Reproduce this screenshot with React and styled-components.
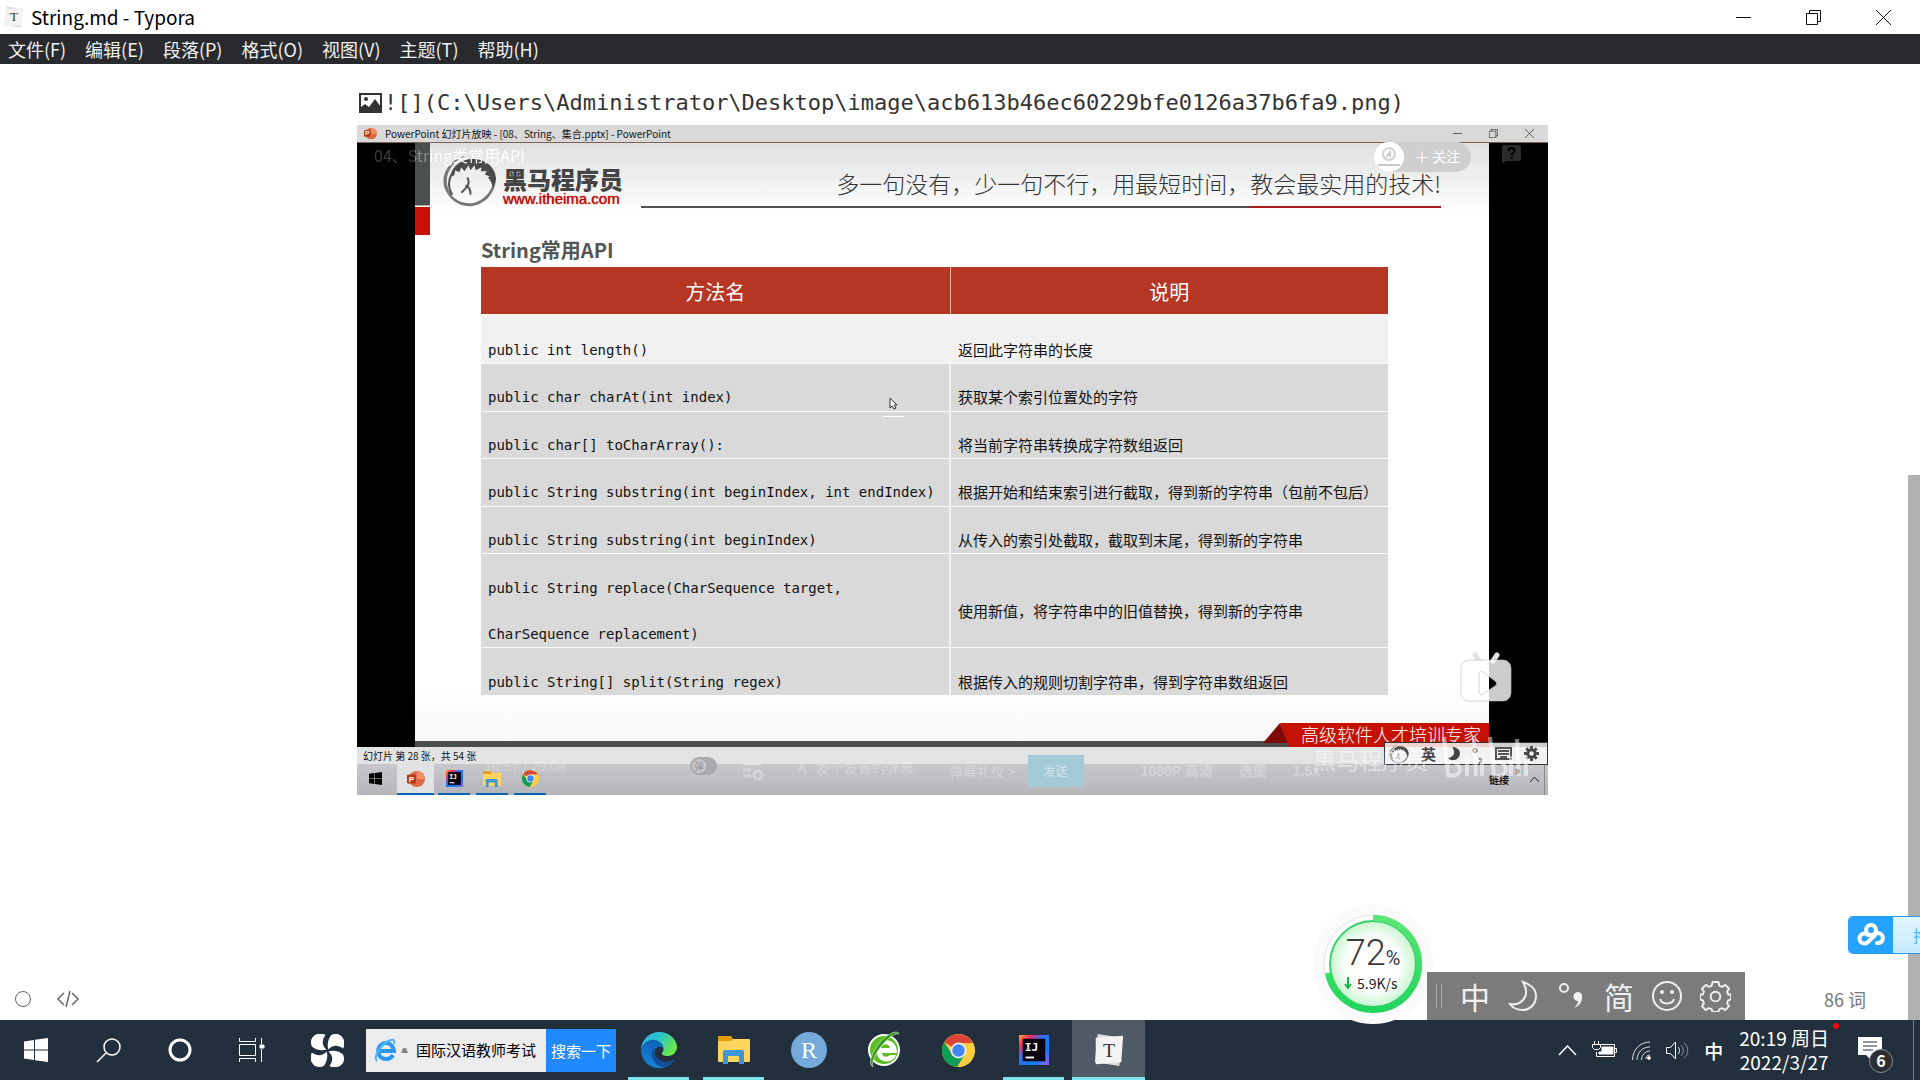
import React from "react";
import styled, { createGlobalStyle } from "styled-components";

const GlobalStyle = createGlobalStyle`
  * { box-sizing: border-box; }
  body {
    margin: 0;
    background: #fff;
    font-family: "Noto Sans CJK SC", sans-serif;
  }
  button {
    border: 0;
    padding: 0;
    background: none;
    color: inherit;
    font: inherit;
  }
  svg { display: block; flex: none; }
`;

const Page = styled.div`
  display: flex;
  flex-direction: column;
  height: 100vh;
  min-height: 900px;
  overflow: hidden;
`;

/* ---------- window chrome ---------- */

const TitleBar = styled.header`
  display: flex;
  align-items: center;
  height: 34px;
  padding: 0 2px 0 3px;
  background: #fff;
`;

const WindowTitle = styled.h1`
  margin: 0 auto 0 6px;
  font-size: 19px;
  line-height: 34px;
  font-weight: 400;
  color: #000;
`;

const WindowButton = styled.button`
  display: flex;
  align-items: center;
  justify-content: center;
  width: 70px;
  height: 34px;
`;

const MenuBar = styled.nav`
  display: flex;
  gap: 19px;
  height: 30px;
  padding-left: 8px;
  background: #292a2e;
  color: #f0f0f0;
`;

const MenuItem = styled.button`
  font-size: 18px;
  line-height: 30px;
`;

/* ---------- editor ---------- */

const Editor = styled.main`
  position: relative;
  flex: 1;
  display: flex;
  min-height: 0;
`;

const Writing = styled.article`
  flex: 1;
  padding: 22px 35px 0 32px;
`;

const Content = styled.div`
  max-width: 1191px;
  margin: 0 auto;
`;

const ImageSource = styled.div`
  display: flex;
  align-items: center;
  gap: 2px;
  height: 33px;
  padding-left: 2px;
  margin-bottom: 6px;
  font-family: "DejaVu Sans Mono", monospace;
  font-size: 22px;
  line-height: 33px;
  color: #333;
  white-space: nowrap;
`;

const ScrollTrack = styled.div`
  display: flex;
  align-items: flex-end;
  width: 12px;
`;

const ScrollThumb = styled.div`
  width: 100%;
  height: 57%;
  background: #b1b1b1;
`;

const EditorFooter = styled.footer`
  position: absolute;
  left: 14px;
  right: 54px;
  bottom: 7px;
  display: flex;
  align-items: center;
  gap: 24px;
  color: #777;
  font-size: 18px;
  line-height: 28px;
`;

const WordCount = styled.button`
  margin-left: auto;
`;

/* ---------- the slide show recording ---------- */

const Shot = styled.section`
  position: relative;
  height: 670px;
  overflow: hidden;
  display: flex;
  flex-direction: column;
  background: #000;
  color: #111;
`;

const PptBar = styled.div`
  display: flex;
  align-items: center;
  height: 18px;
  padding: 0 14px 0 7px;
  background: #d9d9d9;
  border-bottom: 1px solid #7c6250;
  font-size: 10px;
  line-height: 17px;
`;

const PptTitle = styled.span`
  margin: 0 auto 0 8px;
`;

const PptControls = styled.div`
  display: flex;
  gap: 27px;
`;

const Slide = styled.div`
  flex: 1;
  display: flex;
  flex-direction: column;
  margin: 0 59px 0 58px;
  background: linear-gradient(#dfe0e1, #fff 70px, #fff 540px, #f6f6f6);
`;

const SlideBody = styled.div`
  flex: 1;
  display: flex;
`;

const Strip = styled.div`
  width: 15px;
  &::before {
    content: "";
    display: block;
    height: 62px;
    background: #4b4f4f;
    border-bottom: 1px solid #aaa;
  }
  &::after {
    content: "";
    display: block;
    height: 28px;
    margin-top: 1px;
    background: #c81104;
  }
`;

const SlideMain = styled.div`
  flex: 1;
`;

const SlideHead = styled.div`
  display: flex;
  height: 65px;
  padding: 0 48px 0 12px;
`;

const Brand = styled.div`
  display: flex;
  align-items: flex-end;
  gap: 6px;
  width: 199px;
`;

const BrandText = styled.div`
  display: flex;
  flex-direction: column;
  padding-bottom: 1px;
`;

const BrandName = styled.span`
  font-size: 24px;
  line-height: 24px;
  font-weight: 900;
  color: #444;
`;

const BrandLink = styled.a`
  font-family: "Liberation Sans", sans-serif;
  font-size: 15px;
  line-height: 16px;
  font-weight: 400;
  color: #b90d0a;
  text-decoration: none;
  text-shadow: 0 0 1px #b90d0a;
`;

const Slogan = styled.p`
  flex: 1;
  margin: 0;
  padding-top: 24px;
  border-bottom: 2px solid;
  border-image: linear-gradient(90deg, #55504f 76%, #a81c1c 76%) 1;
  font-family: KaiTi, "Noto Sans CJK SC", serif;
  font-size: 23px;
  line-height: 32px;
  font-weight: 300;
  color: #333;
  text-align: right;
  white-space: nowrap;
`;

const SlideHeading = styled.h2`
  margin: 29px 0 4px 51px;
  font-size: 20px;
  line-height: 26px;
  font-weight: 700;
  color: #555;
`;

const ApiTable = styled.table`
  width: calc(100% - 152px);
  height: 428px;
  margin-left: 51px;
  border-collapse: collapse;
  table-layout: fixed;
`;

const HeadCell = styled.th`
  width: ${props => props.$width || "auto"};
  height: 48px;
  padding: 4px 0 0;
  background: #b63624;
  border-bottom: 3px solid #fbf3f2;
  color: #fff;
  font-size: 20px;
  line-height: 30px;
  font-weight: 400;
  & + & { border-left: 1px solid #e2b3a8; }
`;

const Row = styled.tr`
  background: ${props => (props.$light ? "#f1f1f1" : "#d9d9d9")};
  & + & { border-top: 1px solid #fafafa; }
`;

const Cell = styled.td`
  padding: 0 0 0 7px;
  font-family: ${props => (props.$code ? '"DejaVu Sans Mono", monospace' : "inherit")};
  font-size: ${props => (props.$code ? "14px" : "15px")};
  white-space: nowrap;
  & + & { border-left: 2px solid #f3f3f3; }
`;

const CellLine = styled.span`
  display: block;
  padding: 21px 0 1px;
  line-height: 24px;
`;

const SlideFoot = styled.div`
  display: flex;
  align-items: flex-end;
  height: 24px;
`;

const FootBar = styled.div`
  flex: 1;
  height: 6px;
  background: #4a4e4f;
`;

const Ribbon = styled.div`
  display: flex;
  width: 226px;
  height: 24px;
  background: linear-gradient(#0000 18px, #4a4e4f 18px);
`;

const RibbonFold = styled.span`
  width: 26px;
  height: 20px;
  margin-right: -9px;
  background: #7d0a04;
  clip-path: polygon(0 100%, 17px 0, 100% 100%);
`;

const RibbonText = styled.span`
  flex: 1;
  height: 24px;
  padding-left: 21px;
  background: #c51204;
  clip-path: polygon(0 0, 100% 0, 100% 100%, 9px 100%);
  font-family: KaiTi, "Noto Sans CJK SC", serif;
  font-size: 18px;
  line-height: 22px;
  font-weight: 300;
  color: #fff;
  white-space: nowrap;
`;

const StatusLine = styled.div`
  height: 17px;
  padding-left: 6px;
  background: #e3e3e3;
  font-size: 10px;
  line-height: 17px;
`;

const ShotTaskbar = styled.div`
  display: flex;
  height: 31px;
  padding-left: 2px;
  background: linear-gradient(#c8c8cc, #b4b5ba);
`;

const ShotApp = styled.button`
  display: flex;
  align-items: center;
  justify-content: center;
  width: ${props => (props.$wide ? "37px" : "32px")};
  margin-right: ${props => (props.$wide ? "4px" : "6px")};
  background: ${props => (props.$active ? "#e2e2e4" : "none")};
  border-bottom: 2px solid ${props => (props.$open ? "#0a66b5" : "transparent")};
`;

const ShotTray = styled.div`
  display: flex;
  align-items: center;
  gap: 6px;
  margin-left: auto;
  padding: 0 4px 0 0;
  font-size: 10px;
  font-weight: 700;
  border-right: 1px solid #888;
  margin-right: 3px;
`;

const More = styled.span`
  align-self: flex-start;
  width: 8px;
  font-size: 12px;
  line-height: 12px;
  font-weight: 400;
`;

/* everything the video player paints over the recording */

const VideoTitle = styled.span`
  position: absolute;
  left: 17px;
  top: 19px;
  font-size: 16px;
  line-height: 22px;
  color: transparent;
  background: linear-gradient(90deg, #3c3c3c 41px, #8d9090 41px, #8d9090 56px, #fff 56px);
  background-clip: text;
`;

const Follow = styled.button`
  position: absolute;
  right: 77px;
  top: 17px;
  display: flex;
  align-items: center;
  gap: 11px;
  width: 97px;
  height: 30px;
  border-radius: 15px;
  background: #cfcfcf;
  color: #fff;
  font-size: 14px;
  line-height: 28px;
`;

const FollowText = styled.span`
  padding-bottom: 2px;
`;

const Report = styled.button`
  position: absolute;
  right: 27px;
  top: 20px;
`;

const Pointer = styled.span`
  position: absolute;
  left: 526px;
  top: 272px;
  padding: 0 6px 6px;
  border-bottom: 1px solid #fff;
`;

const BigPlay = styled.button`
  position: absolute;
  right: 35px;
  bottom: 92px;
`;

const PlayerBar = styled.div`
  position: absolute;
  left: 127px;
  right: 228px;
  bottom: 8px;
  display: flex;
  align-items: center;
  height: 32px;
  color: rgba(255, 255, 255, 0.3);
  font-size: 14px;
  line-height: 20px;
  white-space: nowrap;
`;

const Toggle = styled.span`
  width: 27px;
  height: 18px;
  margin: 0 25px 10px 124px;
  border-radius: 9px;
  background: #aaaaae;
`;

const ToggleKnob = styled.span`
  display: block;
  width: 14px;
  height: 14px;
  margin: 2px;
  border-radius: 7px;
  background: #c8c8cb;
  color: #999;
  font-size: 10px;
  line-height: 14px;
  text-align: center;
`;

const PlayerTime = styled.span`
  padding-bottom: 12px;
`;

const Hint = styled.span`
  margin: 0 0 8px 34px;
`;

const Etiquette = styled.span`
  margin-left: auto;
  padding-right: 12px;
`;

const Send = styled.button`
  width: 56px;
  height: 32px;
  background: #a4c9d7;
  color: rgba(255, 255, 255, 0.5);
  font-size: 12px;
`;

const Quality = styled.span`
  margin-left: ${props => (props.$first ? "57px" : "26px")};
  font-family: "Liberation Sans", "Noto Sans CJK SC", sans-serif;
  font-weight: 700;
`;

const Watermark = styled.div`
  position: absolute;
  right: 20px;
  bottom: 13px;
  display: flex;
  align-items: center;
  gap: 12px;
  color: rgba(255, 255, 255, 0.5);
  font-size: 23px;
  line-height: 44px;
`;

const ShotIme = styled.div`
  position: absolute;
  right: 0;
  bottom: 30px;
  display: flex;
  align-items: center;
  justify-content: space-between;
  width: 164px;
  height: 23px;
  padding: 0 8px 0 4px;
  background: rgba(244, 244, 244, 0.85);
  border: 1px solid #333;
  color: #444;
  font-size: 15px;
  line-height: 20px;
  font-weight: 700;
`;

/* ---------- floating desktop widgets ---------- */

const Ball = styled.div`
  position: absolute;
  right: 486px;
  bottom: -5px;
  width: 122px;
  height: 122px;
`;

const BallText = styled.div`
  position: absolute;
  left: 0;
  right: 0;
  top: 30px;
  text-align: center;
  color: #3a3a3a;
  font-family: Roboto, sans-serif;
  font-weight: 300;
  font-size: 36px;
  line-height: 40px;
  small { font-size: 20px; font-weight: 400; }
`;

const BallSpeed = styled.div`
  position: absolute;
  left: 32px;
  top: 70px;
  display: flex;
  align-items: center;
  gap: 5px;
  color: #222;
  font-size: 14px;
  line-height: 20px;
`;

const Ime = styled.div`
  position: absolute;
  right: 175px;
  bottom: 0;
  display: flex;
  align-items: center;
  width: 318px;
  height: 48px;
  padding-left: 9px;
  background: #7b7b7b;
  color: #f0f0f0;
`;

const ImeGrip = styled.span`
  width: 6px;
  height: 24px;
  margin-right: 9px;
  border: solid #aaa;
  border-width: 0 1px;
`;

const ImeButton = styled.button`
  display: flex;
  align-items: center;
  justify-content: center;
  width: 48px;
  height: 48px;
  font-size: 30px;
  line-height: 48px;
`;

const CloudTab = styled.div`
  position: absolute;
  right: 0;
  bottom: 66px;
  display: flex;
  width: 72px;
  height: 38px;
  overflow: hidden;
  border: 1px solid #2a9cf5;
  border-right: 0;
  border-radius: 5px 0 0 5px;
  background: linear-gradient(#e2f5ff, #c6ecff);
  color: #4fb4fb;
  font-size: 16px;
  line-height: 36px;
`;

const CloudIcon = styled.span`
  display: flex;
  align-items: center;
  justify-content: center;
  flex: none;
  width: 44px;
  margin-right: 20px;
  background: #25a2ff;
`;

/* ---------- taskbar ---------- */

const Taskbar = styled.footer`
  display: flex;
  align-items: stretch;
  height: 60px;
  background: #222f3d;
  color: #fff;
`;

const TaskButton = styled.button`
  display: flex;
  align-items: center;
  justify-content: center;
  width: ${props => (props.$wide ? "78px" : "72px")};
`;

const SearchBox = styled.form`
  display: flex;
  align-items: center;
  align-self: center;
  width: 250px;
  height: 43px;
  margin-right: 5px;
  padding-left: 8px;
  background: #ececec;
`;

const SearchInput = styled.input`
  flex: 1;
  min-width: 0;
  margin-left: 8px;
  padding: 0;
  border: 0;
  outline: 0;
  background: none;
  color: #000;
  font: 15px/22px "Noto Sans CJK SC", sans-serif;
`;

const SearchSubmit = styled.button`
  width: 70px;
  height: 43px;
  background: #2189ff;
  color: #fff;
  font-size: 15px;
`;

const AppButton = styled.button`
  display: flex;
  align-items: center;
  justify-content: center;
  width: ${props => (props.$active ? "73px" : "61px")};
  margin: 0 ${props => (props.$active ? "1px" : "7px")};
  padding-top: 3px;
  background: ${props => (props.$active ? "#4f5a65" : "none")};
  border-bottom: 3px solid ${props => (props.$open ? "#7fe3ea" : "transparent")};
`;

const Tray = styled.div`
  display: flex;
  align-items: center;
  gap: 15px;
  margin-left: auto;
`;

const TrayLang = styled.button`
  font-size: 19px;
  font-weight: 500;
`;

const Clock = styled.button`
  position: relative;
  margin: 0 14px 0 1px;
  font-size: 19px;
  line-height: 24px;
  text-align: center;
  &::after {
    content: "";
    position: absolute;
    right: -10px;
    top: -3px;
    width: 6px;
    height: 6px;
    border-radius: 3px;
    background: #f00;
  }
`;

const Notice = styled.button`
  position: relative;
  width: 36px;
  padding-bottom: 2px;
`;

const Badge = styled.span`
  position: absolute;
  left: 11px;
  top: 12px;
  width: 24px;
  height: 24px;
  border: 1px solid #8a8f94;
  border-radius: 12px;
  background: #2b2f33;
  font-size: 16px;
  line-height: 21px;
  font-weight: 700;
  text-align: center;
`;

const ShowDesktop = styled.button`
  align-self: stretch;
  width: 7px;
  margin-left: 4px;
  border-left: 1px solid #77808a;
`;

/* ---------- icons ---------- */

const TyporaIcon = ({ size }) => (
  <svg width={size} height={size} viewBox="0 0 34 36">
    <path d="M5 1l26 4-3 30-26-4z" fill="#dcdcdc" />
    <path d="M3 5l29-2-2 28-27 2z" fill="#f3f3f3" />
    <text x="17" y="25" textAnchor="middle" fontFamily="Liberation Serif, serif" fontSize="21" fill="#333">T</text>
  </svg>
);

const WindowsIcon = ({ size, fill }) => (
  <svg width={size} height={size} viewBox="0 0 24 24" fill={fill}>
    <path d="M0 3.4L10 2v9.4H0zM11 1.8L24 0v11.4H11zM0 12.4h10V22L0 20.6zM11 12.4h13V24l-13-1.8z" />
  </svg>
);

const ChromeIcon = ({ size }) => (
  <svg width={size} height={size} viewBox="0 0 48 48">
    <circle cx="24" cy="24" r="24" fill="#ffcd42" />
    <path d="M24 24L3.2 12A24 24 0 0 1 44.8 13H24z" fill="#db4437" />
    <path d="M3.2 12A24 24 0 0 0 22 48l11-18-9-6-10 4z" fill="#0f9d58" />
    <path d="M24 13h20.800A24 24 0 0 1 23 48l10.500-18z" fill="#ffcd42" />
    <circle cx="24" cy="24" r="11.500" fill="#f1f1f1" />
    <circle cx="24" cy="24" r="9" fill="#4285f4" />
  </svg>
);

const FolderIcon = ({ size }) => (
  <svg width={size} height={size} viewBox="0 0 32 30">
    <path d="M0 2a1 1 0 0 1 1-1h12l2 3v4H0z" fill="#e09c0b" />
    <path d="M0 6h13l2-2h16a1 1 0 0 1 1 1v21a1 1 0 0 1-1 1H1a1 1 0 0 1-1-1z" fill="#ffd45f" />
    <path d="M5 17a2 2 0 0 1 2-2h17a2 2 0 0 1 2 2v12h-5v-8H10v8H5z" fill="#3d96dd" />
  </svg>
);

const IdeaIcon = ({ size }) => (
  <svg width={size} height={size} viewBox="0 0 32 32">
    <defs>
      <linearGradient id="idea" x1="0" y1="0" x2="1" y2="1">
        <stop offset="0" stopColor="#fcb01d" />
        <stop offset="0.200" stopColor="#fe2857" />
        <stop offset="0.400" stopColor="#3b6cf0" />
        <stop offset="0.700" stopColor="#087cfa" />
        <stop offset="1" stopColor="#9a5cf5" />
      </linearGradient>
    </defs>
    <path d="M0 0h32v32H0z" fill="url(#idea)" />
    <path d="M4 4h24v24H4z" fill="#0b0410" />
    <text x="6" y="17" fontFamily="DejaVu Sans Mono, monospace" fontWeight="700" fontSize="12" fill="#fff">IJ</text>
    <path d="M7 23h9v2H7z" fill="#fff" />
  </svg>
);

const PptIcon = ({ size }) => (
  <svg width={size} height={size} viewBox="0 0 20 20">
    <circle cx="11" cy="10" r="9" fill="#dd6b42" />
    <path d="M11 1a9 9 0 0 1 9 9h-9z" fill="#f08f6a" />
    <rect y="5" width="10" height="10" rx="1" fill="#b93a1a" />
    <text x="2" y="13" fontFamily="Liberation Sans, sans-serif" fontWeight="700" fontSize="9" fill="#fff">P</text>
  </svg>
);

const EdgeIcon = () => (
  <svg width="36" height="36" viewBox="0 0 36 36">
    <defs>
      <linearGradient id="edgeTop" x1="0" y1="0" x2="1" y2="0.500">
        <stop offset="0" stopColor="#2fb2f3" />
        <stop offset="0.500" stopColor="#2cc5c8" />
        <stop offset="1" stopColor="#6be84c" />
      </linearGradient>
      <linearGradient id="edgeBody" x1="0" y1="0" x2="0" y2="1">
        <stop offset="0" stopColor="#0f62b8" />
        <stop offset="1" stopColor="#1687e0" />
      </linearGradient>
    </defs>
    <path d="M0 17C1 7 9 0 18 0c11 0 18 8 18 15 0 5-4 9-9 9-4 0-7-1-6-3 2-3 2-5 0-8-5-6-16-5-21 4z" fill="url(#edgeTop)" />
    <path d="M0 18c1-7 8-11 14-10 5 1 8 4 8 8-4-3-9 0-8 6 1 7 8 10 14 8 2-1 4-2 5-2-3 5-8 8-15 8C8 36 0 28 0 18z" fill="url(#edgeBody)" />
    <path d="M12 17c-4 8 2 18 11 18 5-1 8-4 10-7-8 4-17 1-19-6-1-2 0-4 1-6z" fill="#124f96" />
  </svg>
);

const SafeBrowserIcon = () => (
  <svg width="36" height="38" viewBox="0 0 36 38">
    <circle cx="18" cy="19" r="15" fill="#5cbd22" stroke="#fff" strokeWidth="2" />
    <path d="M31 22H16c0 4 5 5 8 2h6c-2 6-9 8-15 5-6-4-6-14 0-18s16-1 16 11zM15 17h9c-1-5-8-5-9 0z" fill="#fff" />
    <path d="M7 36C-1 32 12 9 24 3c5-3 9-2 9 0-3-1-9 2-15 9C10 21 5 30 7 36z" fill="#35971b" stroke="#fff" strokeWidth=".5" />
  </svg>
);

const RIcon = () => (
  <svg width="36" height="36" viewBox="0 0 36 36">
    <circle cx="18" cy="18" r="18" fill="#75aadb" />
    <text x="18" y="26" textAnchor="middle" fontFamily="Liberation Serif, serif" fontSize="24" fill="#fff">R</text>
  </svg>
);

const SwirlIcon = () => (
  <svg width="33" height="33" viewBox="0 0 34 34" fill="#fff">
    {[0, 90, 180, 270].map(a => (
      <path key={a} transform={`rotate(${a} 17 17)`} d="M16 16C11 18 4 16 1 13-1 9 0 4 3 2 6-1 12-1 15 1 11 6 11 12 16 16z" />
    ))}
  </svg>
);

const IeIcon = () => (
  <svg width="22" height="24" viewBox="0 0 22 24" fill="none">
    <path d="M19 17c-2 4-7 5-11 3s-5-8-2-12 9-4 12 0c1 2 2 3 2 5H6" stroke="#2c97f2" strokeWidth="4" />
    <path d="M3 23c-4-4 4-18 14-21 3-1 4 1 3 4" stroke="#4bb6fa" strokeWidth="2" />
  </svg>
);

const HorseIcon = ({ size }) => (
  <svg width={size} height={size} viewBox="0 0 54 54" fill="none">
    <path d="M23 3C8 6-1 20 2 33c4 13 16 21 28 19 13-2 22-13 23-26l-3-7c3 14-6 27-19 30-13 2-24-5-26-18C3 19 11 8 23 3z" fill="#777" />
    <path d="M8 23C10 12 21 5 32 6c12 1 21 9 21 20l-3 8c-1-4-2-7-5-10l2-1-5-2 2-3-6 0 1-4-6 3-1-5-4 5-2-5-4 6-3-4-2 5-4-2-1 5z" fill="#4a4a4a" />
    <path d="M10 20C5 28 7 36 10 41M25 24c3 6 0 9-6 15M23 32c4 1 5 4 5 9" stroke="#555" strokeWidth="2" />
  </svg>
);

const GearIcon = ({ size, width }) => (
  <svg width={size} height={size} viewBox="0 0 32 32" fill="none" stroke="currentColor" strokeWidth={width} strokeLinejoin="round">
    <path d="M13 1h6l1 4 3 1 3-2 4 4-2 3 1 3 3 0v5l-3 1-1 3 2 3-4 4-3-2-3 1-1 3h-6l-1-3-3-1-3 2-4-4 2-3-1-3-3-1v-5h3l1-3-2-3 4-4 3 2 3-1z" />
    <circle cx="16" cy="16" r="5" />
  </svg>
);

const SmallGearIcon = () => (
  <svg width="15" height="15" viewBox="0 0 16 16" fill="none" stroke="#444">
    <circle cx="8" cy="8" r="4" strokeWidth="3" />
    <path d="M8 0v3M8 13v3M0 8h3M13 8h3M2.500 2.500l2 2M11.500 11.500l2 2M2.500 13.500l2-2M11.500 4.500l2-2" strokeWidth="3" />
  </svg>
);

const MoonIcon = ({ size }) => (
  <svg width={size} height={size} viewBox="0 0 30 32" fill="none" stroke="currentColor" strokeWidth="2">
    <path d="M15 2c7 2 13 7 13 14 0 8-6 14-13 14-6 0-11-3-13-6 12 2 21-9 13-22z" />
  </svg>
);

const WinControls = ({ size }) => [
  <svg key="min" width={size} height={size} viewBox="0 0 15 15"><path d="M0 7.500h15" stroke="#111" /></svg>,
  <svg key="max" width={size} height={size} viewBox="0 0 15 15" fill="none" stroke="#111">
    <path d="M.5 3.500h11v11H.5zM3.500 3V.5h11v11H12" />
  </svg>,
  <svg key="close" width={size} height={size} viewBox="0 0 15 15"><path d="M0 0l15 15M15 0L0 15" stroke="#111" /></svg>,
];

/* ---------- data ---------- */

const menus = ["文件(F)", "编辑(E)", "段落(P)", "格式(O)", "视图(V)", "主题(T)", "帮助(H)"];

const methods = [
  { code: ["public int length()"], text: "返回此字符串的长度" },
  { code: ["public char charAt(int index)"], text: "获取某个索引位置处的字符" },
  { code: ["public char[] toCharArray():"], text: "将当前字符串转换成字符数组返回" },
  { code: ["public String substring(int beginIndex, int endIndex)"], text: "根据开始和结束索引进行截取，得到新的字符串（包前不包后）" },
  { code: ["public String substring(int beginIndex)"], text: "从传入的索引处截取，截取到末尾，得到新的字符串" },
  { code: ["public String replace(CharSequence target,", "CharSequence replacement)"], text: "使用新值，将字符串中的旧值替换，得到新的字符串" },
  { code: ["public String[] split(String regex)"], text: "根据传入的规则切割字符串，得到字符串数组返回" },
];

const apps = [
  { name: "Edge", icon: <EdgeIcon />, open: true },
  { name: "Explorer", icon: <FolderIcon size={32} />, open: true },
  { name: "RStudio", icon: <RIcon /> },
  { name: "360", icon: <SafeBrowserIcon /> },
  { name: "Chrome", icon: <ChromeIcon size={33} /> },
  { name: "IntelliJ IDEA", icon: <IdeaIcon size={30} />, open: true },
  { name: "Typora", icon: <TyporaIcon size={34} />, open: true, active: true },
];

function SlideShow() {
  return (
    <Shot>
      <PptBar>
        <PptIcon size={13} />
        <PptTitle>PowerPoint 幻灯片放映 - [08、String、集合.pptx] - PowerPoint</PptTitle>
        <PptControls><WinControls size={9} /></PptControls>
      </PptBar>
      <Slide>
        <SlideBody>
          <Strip />
          <SlideMain>
            <SlideHead>
              <Brand>
                <HorseIcon size={55} />
                <BrandText>
                  <BrandName>黑马程序员</BrandName>
                  <BrandLink href="#itheima">www.itheima.com</BrandLink>
                </BrandText>
              </Brand>
              <Slogan>多一句没有，少一句不行，用最短时间，教会最实用的技术!</Slogan>
            </SlideHead>
            <SlideHeading>String常用API</SlideHeading>
            <ApiTable>
              <thead>
                <tr>
                  <HeadCell $width="469px">方法名</HeadCell>
                  <HeadCell>说明</HeadCell>
                </tr>
              </thead>
              <tbody>
                {methods.map((method, index) => (
                  <Row key={method.code[0]} $light={index === 0}>
                    <Cell $code>
                      {method.code.map(line => <CellLine key={line}>{line}</CellLine>)}
                    </Cell>
                    <Cell><CellLine>{method.text}</CellLine></Cell>
                  </Row>
                ))}
              </tbody>
            </ApiTable>
          </SlideMain>
        </SlideBody>
        <SlideFoot>
          <FootBar />
          <Ribbon>
            <RibbonFold />
            <RibbonText>高级软件人才培训专家</RibbonText>
          </Ribbon>
        </SlideFoot>
      </Slide>
      <StatusLine>幻灯片 第 28 张，共 54 张</StatusLine>
      <ShotTaskbar>
        <ShotApp aria-label="Start"><WindowsIcon size={13} fill="#000" /></ShotApp>
        <ShotApp $wide $active $open aria-label="PowerPoint"><PptIcon size={18} /></ShotApp>
        <ShotApp $open aria-label="IDEA"><IdeaIcon size={17} /></ShotApp>
        <ShotApp $open aria-label="Explorer"><FolderIcon size={18} /></ShotApp>
        <ShotApp $open aria-label="Chrome"><ChromeIcon size={17} /></ShotApp>
        <ShotTray>
          链接
          <More>»</More>
          <svg width="11" height="7" viewBox="0 0 11 7" fill="none" stroke="#222"><path d="M1 6l4.500-5L10 6" /></svg>
        </ShotTray>
      </ShotTaskbar>

      <VideoTitle>04、String类常用API</VideoTitle>
      <Follow>
        <svg width="30" height="30" viewBox="0 0 30 30" fill="none">
          <circle cx="15" cy="15" r="15" fill="#fff" />
          <circle cx="15" cy="12" r="6" stroke="#cdd1d3" strokeWidth="2" />
          <path d="M12 15l4-5v5M4 23h22" stroke="#ccc" strokeWidth="2" />
        </svg>
        <FollowText>＋ 关注</FollowText>
      </Follow>
      <Report aria-label="反馈">
        <svg width="19" height="19" viewBox="0 0 19 19">
          <path d="M2 0h15a2 2 0 0 1 2 2v12a2 2 0 0 1-2 2H4l-4 3V2a2 2 0 0 1 2-2z" fill="#2b2b2b" />
          <path d="M6.500 6c0-4 6-4 6 0 0 2-3 2-3 4.500M9.500 12v2" fill="none" stroke="#000" strokeWidth="2" />
        </svg>
      </Report>
      <Pointer>
        <svg width="9" height="13" viewBox="0 0 9 13"><path d="M1 1v10l2-2 2 3 2-1-2-3h3z" fill="#fff" stroke="#333" /></svg>
      </Pointer>
      <BigPlay aria-label="播放">
        <svg width="54" height="52" viewBox="0 0 54 52">
          <path d="M16 4l4 6M38 4l-4 6" stroke="#e2e2e2" strokeWidth="5" strokeLinecap="round" />
          <path fillRule="evenodd" d="M10 9h34a8 8 0 0 1 8 8v25a8 8 0 0 1-8 8H10a8 8 0 0 1-8-8V17a8 8 0 0 1 8-8zm10 14v18c0 3 2 3 4 2l12-8c2-2 2-3 0-5l-12-9c-2-1-4-1-4 2z" fill="#fff" fillOpacity=".8" stroke="#bbb" strokeOpacity=".6" />
        </svg>
      </BigPlay>
      <PlayerBar>
        <PlayerTime>10:57 / 29:08</PlayerTime>
        <Toggle><ToggleKnob>弹</ToggleKnob></Toggle>
        <svg width="22" height="20" viewBox="0 0 22 20" fill="none" stroke="currentColor" strokeWidth="3"><path d="M1 3h18M1 9h8M1 15h8" /><circle cx="16" cy="14" r="4" /></svg>
        <Hint>A&nbsp;&nbsp; 发个友善的弹幕</Hint>
        <Etiquette>弹幕礼仪 &gt;</Etiquette>
        <Send>发送</Send>
        <Quality $first>1080P 高清</Quality>
        <Quality>选集</Quality>
        <Quality>1.5x</Quality>
      </PlayerBar>
      <ShotIme>
        <HorseIcon size={20} />
        <span>英</span>
        <svg width="12" height="14" viewBox="0 0 12 14"><path d="M4 0c4 5 2 10-4 11 5 5 12 1 12-5 0-3-3-6-8-6z" fill="#444" /></svg>
        <span>°,</span>
        <svg width="17" height="13" viewBox="0 0 17 13" fill="none" stroke="#555" strokeWidth="2"><path d="M1 1h15v11H1zM3 4h11M3 7h11M5 10h7" /></svg>
        <SmallGearIcon />
      </ShotIme>
      <Watermark>
        <span>黑马程序员</span>
        <svg width="88" height="46" viewBox="0 0 88 46" fill="none" stroke="currentColor" strokeWidth="4">
          <path d="M4 1l4 38c9 3 15-4 10-10-3-4-8-3-11-1M27 20v20M34 3l2 37M42 20v20M50 1l4 38c9 3 15-4 10-10-3-4-8-3-11-1M71 20v20M77 3l2 37M86 20v20" />
        </svg>
      </Watermark>
    </Shot>
  );
}

export default function App() {
  return (
    <Page>
      <GlobalStyle />
      <TitleBar>
        <TyporaIcon size={22} />
        <WindowTitle>String.md - Typora</WindowTitle>
        {WinControls({ size: 15 }).map(icon => (
          <WindowButton key={icon.key} aria-label={icon.key}>{icon}</WindowButton>
        ))}
      </TitleBar>
      <MenuBar>
        {menus.map(menu => <MenuItem key={menu}>{menu}</MenuItem>)}
      </MenuBar>

      <Editor>
        <Writing>
          <Content>
            <ImageSource>
              <svg width="23" height="20" viewBox="0 0 23 20">
                <path d="M1 1h21v18H1z" fill="#fff" stroke="#333" strokeWidth="2" />
                <circle cx="7" cy="6" r="2" fill="#333" />
                <path d="M2 18v-4l4-3 4 3 6-8 6 8v4z" fill="#333" />
              </svg>
              <span>![](C:\Users\Administrator\Desktop\image\acb613b46ec60229bfe0126a37b6fa9.png)</span>
            </ImageSource>
            <SlideShow />
          </Content>
        </Writing>
        <ScrollTrack><ScrollThumb /></ScrollTrack>

        <EditorFooter>
          <button aria-label="侧边栏">
            <svg width="18" height="18" viewBox="0 0 18 18" fill="none" stroke="#666"><circle cx="9" cy="9" r="7.500" /></svg>
          </button>
          <button aria-label="源代码模式">
            <svg width="24" height="18" viewBox="0 0 24 18" fill="none" stroke="#666" strokeWidth="1.500"><path d="M8 3L2 9l6 6M16 3l6 6-6 6M14 1l-4 16" /></svg>
          </button>
          <WordCount>86 词</WordCount>
        </EditorFooter>

        <Ball>
          <svg width="122" height="122" viewBox="0 0 122 122" fill="none">
            <defs>
              <radialGradient id="ballFill">
                <stop offset="0.600" stopColor="#fff" />
                <stop offset="1" stopColor="#c9f5cf" />
              </radialGradient>
              <linearGradient id="ballRing" x1="0" y1="0" x2="0" y2="1">
                <stop offset="0" stopColor="#5be673" />
                <stop offset="1" stopColor="#1fd65c" />
              </linearGradient>
            </defs>
            <circle cx="61" cy="61" r="60" fill="#fafafa" />
            <circle cx="61" cy="61" r="49" fill="#fff" stroke="#e3e3e3" />
            <circle cx="61" cy="61" r="43" fill="url(#ballFill)" stroke="#35cf6c" strokeWidth="2" />
            <path d="M61 15A46 46 0 1 1 16 70" stroke="url(#ballRing)" strokeWidth="6" />
          </svg>
          <BallText>72<small>%</small></BallText>
          <BallSpeed>
            <svg width="8" height="12" viewBox="0 0 8 12" fill="none" stroke="#17b544" strokeWidth="2"><path d="M4 0v11M1 7l3 4 3-4" /></svg>
            5.9K/s
          </BallSpeed>
        </Ball>

        <Ime>
          <ImeGrip />
          <ImeButton>中</ImeButton>
          <ImeButton aria-label="半角"><MoonIcon size={32} /></ImeButton>
          <ImeButton aria-label="标点">
            <svg width="26" height="28" viewBox="0 0 26 28">
              <circle cx="6" cy="6" r="4" fill="none" stroke="currentColor" strokeWidth="2" />
              <path d="M20 10a4 4 0 0 1 4 5c0 6-3 9-8 11 3-3 4-5 4-7a4.500 4.500 0 0 1 0-9z" fill="currentColor" />
            </svg>
          </ImeButton>
          <ImeButton>简</ImeButton>
          <ImeButton aria-label="表情">
            <svg width="32" height="32" viewBox="0 0 32 32" fill="none" stroke="currentColor" strokeWidth="2">
              <circle cx="16" cy="16" r="14" /><path d="M9 19c2 6 12 6 14 0" />
              <circle cx="11" cy="12" r="1" /><circle cx="21" cy="12" r="1" />
            </svg>
          </ImeButton>
          <ImeButton aria-label="设置"><GearIcon size={31} width={2} /></ImeButton>
        </Ime>

        <CloudTab>
          <CloudIcon>
            <svg width="30" height="24" viewBox="0 0 30 24" fill="none" stroke="#fff" strokeWidth="4" strokeLinecap="round">
              <circle cx="15" cy="7" r="5" />
              <path d="M19 12l-7 7a5 5 0 1 1 0-7M18 12a5 5 0 1 1 3 8" />
            </svg>
          </CloudIcon>
          拖
        </CloudTab>
      </Editor>

      <Taskbar>
        <TaskButton aria-label="开始"><WindowsIcon size={24} fill="#fff" /></TaskButton>
        <TaskButton aria-label="搜索">
          <svg width="25" height="25" viewBox="0 0 25 25" fill="none" stroke="#fff" strokeWidth="1.500"><circle cx="16" cy="9" r="8" /><path d="M10 15l-9 9" /></svg>
        </TaskButton>
        <TaskButton aria-label="Cortana">
          <svg width="24" height="24" viewBox="0 0 24 24" fill="none" stroke="#fff" strokeWidth="3"><circle cx="12" cy="12" r="10" /></svg>
        </TaskButton>
        <TaskButton aria-label="任务视图">
          <svg width="26" height="24" viewBox="0 0 26 24" fill="none" stroke="#fff">
            <path d="M.5 0v3.500h16V0M.5 6.500h16v11H.5zM.5 24v-3.500h16V24M22.500 0v6M22.500 11v13" />
            <path d="M21 7h4v3h-4z" fill="#fff" />
          </svg>
        </TaskButton>
        <TaskButton $wide aria-label="360"><SwirlIcon /></TaskButton>
        <SearchBox onSubmit={event => event.preventDefault()}>
          <IeIcon />
          <svg width="12" height="5" viewBox="0 0 12 5"><path d="M5 5l2-5h3l2 5z" fill="#888" /></svg>
          <SearchInput aria-label="搜索" defaultValue="国际汉语教师考试" />
          <SearchSubmit>搜索一下</SearchSubmit>
        </SearchBox>
        {apps.map(app => (
          <AppButton key={app.name} aria-label={app.name} $open={app.open} $active={app.active}>
            {app.icon}
          </AppButton>
        ))}
        <Tray>
          <svg width="19" height="11" viewBox="0 0 19 11" fill="none" stroke="#fff" strokeWidth="1.500"><path d="M1 10l8.500-9L18 10" /></svg>
          <svg width="25" height="18" viewBox="0 0 25 18" fill="none" stroke="#fff">
            <path d="M9 3.500h13.500v12H4.500V11M23 7.500h1.500v4H23M2.500 0v3M6.500 0v3M.5 3.500h8v3l-2 2h-4l-2-2z" />
            <path d="M10 6h11v7H7v-2h3z" fill="#fff" />
          </svg>
          <svg width="19" height="19" viewBox="0 0 19 19" fill="none" stroke="#ddd">
            <path d="M.5 19C.5 9 8 1 18 1M5 19C5 12 10 6 18 6M9.500 19c0-5 4-9 8.500-9M14 18c0-2 1-4 4-4" /><circle cx="17" cy="17" r="1.500" fill="#fff" />
          </svg>
          <svg width="23" height="19" viewBox="0 0 23 19" fill="none" stroke="#fff">
            <path d="M.5 6.500h4L9.500 1v17l-5-5.500h-4zM12 6c2 2 2 5 0 7" /><path d="M15 4c3 3 3 8 0 11M18 2c5 4 5 11 0 15" stroke="#8b949c" />
          </svg>
          <TrayLang>中</TrayLang>
          <Clock>20:19 周日<br />2022/3/27</Clock>
          <Notice aria-label="通知">
            <svg width="24" height="24" viewBox="0 0 24 24"><path d="M0 0h24v18H14v6l-6-6H0z" fill="#fff" /><path d="M5 5h14M5 9h14M5 13h10" stroke="#222f3d" /></svg>
            <Badge>6</Badge>
          </Notice>
          <ShowDesktop aria-label="显示桌面" />
        </Tray>
      </Taskbar>
    </Page>
  );
}
